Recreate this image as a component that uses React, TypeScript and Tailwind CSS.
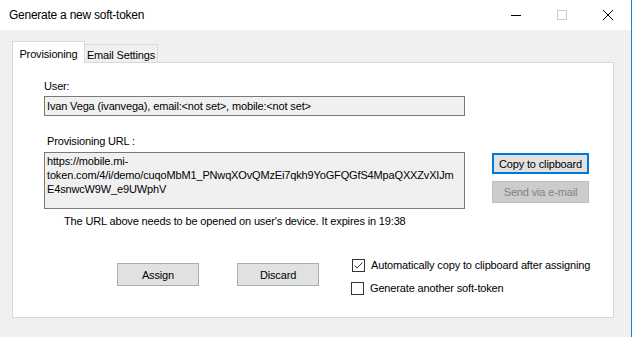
import React from 'react'

const font = { fontFamily: '"Liberation Sans", Arial, sans-serif' }

function TitleBar() {
  return (
    <div className="flex h-[30px] items-center bg-white pl-[9px]">
      <span className="text-[12px] tracking-[-0.25px] text-black">Generate a new soft-token</span>
      <div className="ml-auto flex h-full">
        <div className="flex w-[46px] items-center justify-center">
          <div className="h-px w-[10px] bg-black" />
        </div>
        <div className="flex w-[46px] items-center justify-center">
          <div className="h-[10px] w-[10px] border border-[#cccccc]" />
        </div>
        <div className="flex w-[46px] items-center justify-center">
          <svg width="10" height="10" viewBox="0 0 10 10">
            <path d="M0 0 L10 10 M10 0 L0 10" stroke="#000" strokeWidth="1" />
          </svg>
        </div>
      </div>
    </div>
  )
}

function Checkbox({ checked, label }: { checked?: boolean; label: string }) {
  return (
    <div className="flex items-center whitespace-nowrap">
      <div className="flex h-[13px] w-[13px] items-center justify-center border border-[#333333] bg-white">
        {checked && (
          <svg width="11" height="11" viewBox="0 0 11 11">
            <path d="M1.5 5.5 L4 8 L9.5 2.5" stroke="#333" strokeWidth="1" fill="none" />
          </svg>
        )}
      </div>
      <span className="ml-[6px] leading-[14px] text-black">{label}</span>
    </div>
  )
}

export default function App() {
  return (
    <div style={font} className="h-[337px] w-[632px] overflow-hidden border-r border-[#1883d7] bg-[#f0f0f0] text-[11px] tracking-[-0.15px]">
      <TitleBar />
      <div className="pl-[12px] pt-[12px]">
        {/* tabs */}
        <div className="flex h-[20px] items-end whitespace-nowrap">
          <div className="relative z-10 -mb-px flex h-[22px] w-[73px] items-start justify-center border border-b-0 border-[#d9d9d9] bg-white pt-[5px] leading-[14px] text-black">
            Provisioning
          </div>
          <div className="flex h-[18px] w-[73px] items-start justify-center border border-b-0 border-l-0 border-[#d9d9d9] bg-[#f0f0f0] pt-[3px] leading-[14px] text-black">
            Email Settings
          </div>
        </div>
        {/* panel */}
        <div className="h-[256px] w-[602px] border border-[#d9d9d9] bg-white pl-[31px] leading-[14px] text-black">
          <div className="pt-[16px]">User:</div>
          <div className="mt-[3px] flex h-[20px] w-[421px] items-center whitespace-nowrap border border-[#7a7a7a] bg-[#f0f0f0] pl-[2px]">
            Ivan Vega (ivanvega), email:&lt;not set&gt;, mobile:&lt;not set&gt;
          </div>
          <div className="mt-[18px] pl-[3px]">Provisioning URL :</div>
          <div className="mt-[4px] flex">
            <div className="h-[57px] w-[421px] border border-[#7a7a7a] bg-[#f0f0f0] pl-[2px] pt-[1px]">
              <div className="whitespace-pre">https://mobile.mi-</div>
              <div className="whitespace-pre">token.com/4/i/demo/cuqoMbM1_PNwqXOvQMzEi7qkh9YoGFQGfS4MpaQXXZvXIJm</div>
              <div className="whitespace-pre">E4snwcW9W_e9UWphV</div>
            </div>
            <div className="ml-[27px] flex flex-col whitespace-nowrap pt-px">
              <div className="flex h-[21px] w-[97px] items-center justify-center border-2 border-[#0078d7] bg-[#e1e1e1]">
                Copy to clipboard
              </div>
              <div className="mt-[7px] flex h-[22px] w-[97px] items-center justify-center border border-[#bfbfbf] bg-[#cccccc] text-[#838383]">
                Send via e-mail
              </div>
            </div>
          </div>
          <div className="mt-[5px] whitespace-nowrap pl-[20px]">The URL above needs to be opened on user's device. It expires in 19:38</div>
          <div className="mt-[30px] flex">
            <div className="ml-[73px] mt-[5px] flex h-[23px] w-[82px] items-center justify-center border border-[#adadad] bg-[#e1e1e1]">
              Assign
            </div>
            <div className="ml-[38px] mt-[5px] flex h-[23px] w-[82px] items-center justify-center border border-[#adadad] bg-[#e1e1e1]">
              Discard
            </div>
            <div className="ml-[32px] flex flex-col gap-[9px]">
              <div className="pl-px">
                <Checkbox checked label="Automatically copy to clipboard after assigning" />
              </div>
              <Checkbox label="Generate another soft-token" />
            </div>
          </div>
        </div>
      </div>
    </div>
  )
}
